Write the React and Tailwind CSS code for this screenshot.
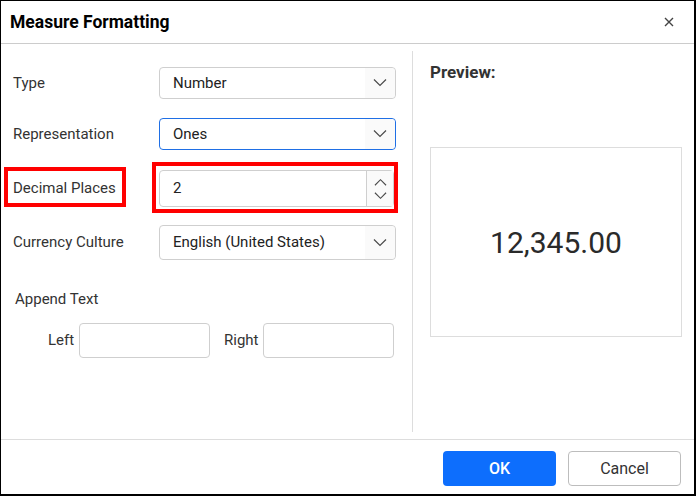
const FONT = { fontFamily: 'Roboto, "Liberation Sans", sans-serif' }

function Chevron({ up = false, className = '' }) {
  return (
    <svg width="14" height="8" viewBox="0 0 14 8" className={className} fill="none">
      <path
        d={up ? 'M1 7.5 L7 1.5 L13 7.5' : 'M1 0.5 L7 6.5 L13 0.5'}
        stroke="#4a4a4a"
        strokeWidth="1.2"
      />
    </svg>
  )
}

function Dropdown({ value, active = false, height = 'h-[32px]' }) {
  return (
    <div
      className={`flex w-[237px] ${height} items-stretch rounded-[4px] border bg-white ${
        active ? 'border-[#1f6fe5]' : 'border-[#cfcfcf]'
      }`}
    >
      <div className="flex flex-1 items-center pl-[13px] text-[15px] text-[#222]">{value}</div>
      <div className="flex w-[30px] items-center justify-center rounded-r-[4px] bg-[#fafafa]">
        <Chevron />
      </div>
    </div>
  )
}

function Row({ label, children, className = '' }) {
  return (
    <div className={`flex items-center ${className}`}>
      <div className="w-[146px] text-[15px] text-[#333]">{label}</div>
      {children}
    </div>
  )
}

export default function App() {
  return (
    <div
      className="relative flex h-[496px] w-[696px] flex-col border-t border-l border-r-2 border-b-2 border-black bg-white"
      style={FONT}
    >
      {/* header */}
      <div className="flex h-[43px] shrink-0 items-center justify-between border-b border-[#cccccc] pl-[9px] pr-[20px]">
        <h1 className="text-[17.5px] font-bold text-black">Measure Formatting</h1>
        <svg width="10" height="10" viewBox="0 0 10 10">
          <path d="M1 1 L9 9 M9 1 L1 9" stroke="#444" strokeWidth="1.4" />
        </svg>
      </div>

      {/* body */}
      <div className="flex flex-1">
        <div className="flex w-[411px] flex-col pl-[12px] pt-[23px]">
          <Row label="Type">
            <Dropdown value="Number" />
          </Row>
          <Row label="Representation" className="mt-[19px]">
            <Dropdown value="Ones" active />
          </Row>
          <Row label="Decimal Places" className="mt-[20px]">
            <div className="flex h-[37px] w-[235px] items-stretch rounded-[4px] border border-[#cfcfcf] bg-white">
              <div className="flex flex-1 items-center pl-[13px] text-[15px] text-[#222]">2</div>
              <div className="flex w-[27px] flex-col items-center justify-center gap-[6px] border-l border-[#cfcfcf] bg-[#fafafa]">
                <Chevron up className="w-[13px]" />
                <Chevron className="w-[13px]" />
              </div>
            </div>
          </Row>
          <Row label="Currency Culture" className="mt-[18px]">
            <Dropdown value="English (United States)" height="h-[35px]" />
          </Row>

          <div className="mt-[29px] pl-[2px] text-[15px] leading-[20px] text-[#333]">Append Text</div>
          <div className="mt-[14px] flex items-center pl-[35px] text-[15px] text-[#333]">
            <span className="w-[31px]">Left</span>
            <div className="h-[35px] w-[131px] rounded-[4px] border border-[#cfcfcf]" />
            <span className="ml-[14px] w-[39px]">Right</span>
            <div className="h-[35px] w-[131px] rounded-[4px] border border-[#cfcfcf]" />
          </div>
        </div>

        <div className="my-[7px] w-px bg-[#dddddd]" />

        <div className="flex flex-1 flex-col pl-[17px] pt-[17px]">
          <div className="text-[17px] font-bold leading-[22px] text-[#333]">Preview:</div>
          <div className="mt-[64px] flex h-[190px] w-[252px] items-center justify-center border border-[#dddddd] text-[30px] text-[#2a2a2a]">
            12,345.00
          </div>
        </div>
      </div>

      {/* footer */}
      <div className="flex h-[55px] shrink-0 items-start justify-end gap-[12px] border-t border-[#dddddd] pr-[13px] pt-[11px]">
        <button className="h-[35px] w-[113px] rounded-[4px] bg-[#0d6efd] text-[16px] font-medium text-white">
          OK
        </button>
        <button className="h-[35px] w-[113px] rounded-[4px] border border-[#bdbdbd] bg-white text-[16px] text-[#333]">
          Cancel
        </button>
      </div>

      {/* red annotation boxes */}
      <div className="absolute left-[3px] top-[166px] h-[40px] w-[122px] border-4 border-[#ff0000]" />
      <div className="absolute left-[151px] top-[161px] h-[51px] w-[246px] border-4 border-[#ff0000]" />
    </div>
  )
}
